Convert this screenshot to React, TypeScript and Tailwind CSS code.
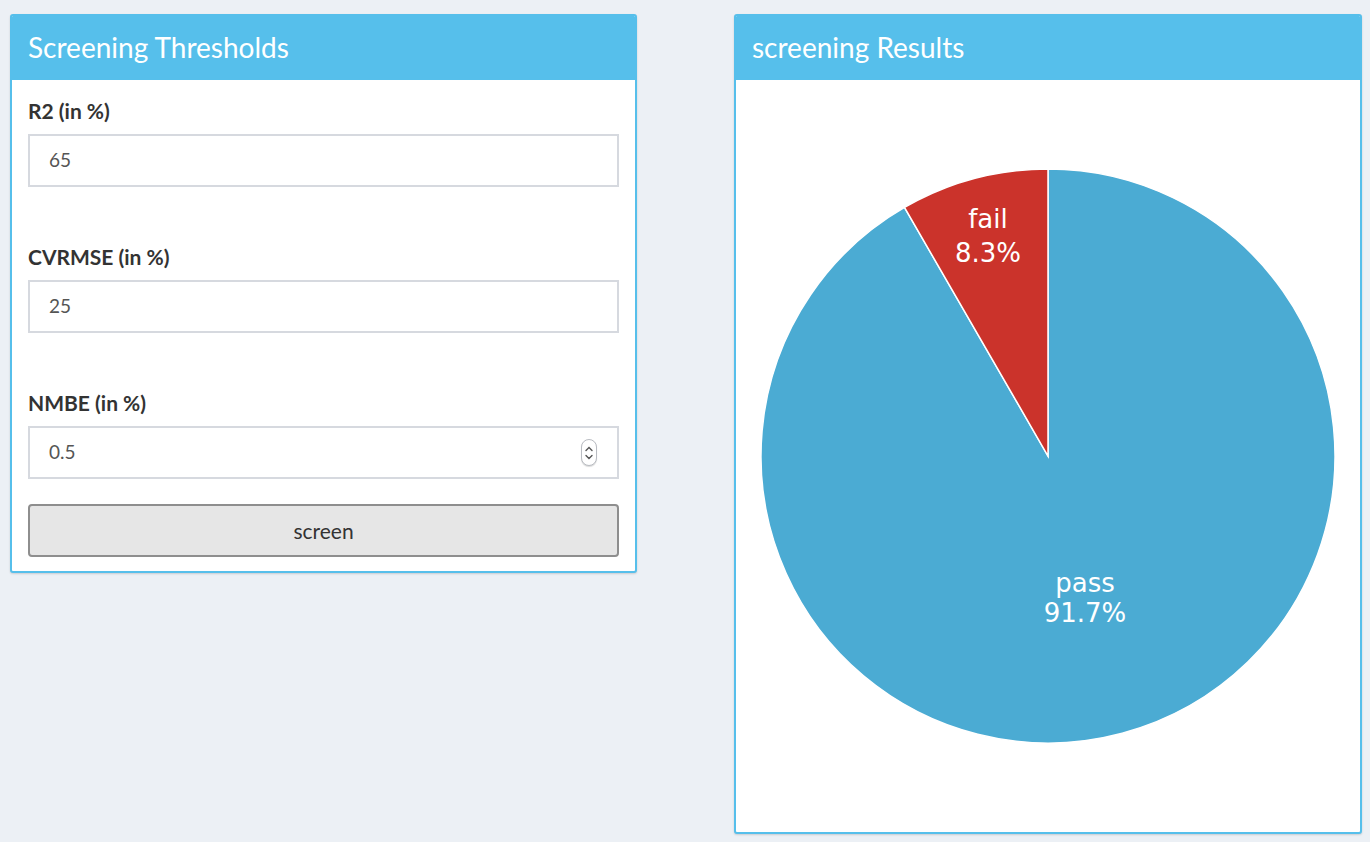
import React from 'react'

const font = { fontFamily: '"Source Sans Pro", Lato, "Open Sans", sans-serif' }

function Spinner() {
    return (
        <div className="flex h-[27px] w-[16px] flex-col items-center justify-center rounded-full border border-[#b9bcc2] bg-white shadow-[0_1px_1px_rgba(0,0,0,0.15)]">
            <svg width="10" height="18" viewBox="0 0 10 18" fill="none" stroke="#555" strokeWidth="1.4" strokeLinecap="round">
                <path d="M2 6.5 L5 3.5 L8 6.5" />
                <path d="M2 11.5 L5 14.5 L8 11.5" />
            </svg>
        </div>
    )
}

function Field({ label, value, spin, last }: { label: string; value: string; spin?: boolean; last?: boolean }) {
    return (
        <div className={last ? 'mb-[25px]' : 'mb-[59px]'}>
            <p className="mb-[12px] text-[21px] font-bold leading-[22px] text-[#333]">{label}</p>
            <div className="flex h-[53px] items-center justify-between border-2 border-[#d6d9df] pl-[19px] pr-[20px] text-[19px] text-[#555]">
                <span>{value}</span>
                {spin && <Spinner />}
            </div>
        </div>
    )
}

function Pie() {
    const cx = 314
    const cy = 376
    const r = 287
    const a = (30 * Math.PI) / 180
    const x = cx - r * Math.sin(a)
    const y = cy - r * Math.cos(a)
    return (
        <svg width="628" height="752" viewBox="0 0 628 752">
            <path d={`M${cx} ${cy} L${cx} ${cy - r} A${r} ${r} 0 1 1 ${x} ${y} Z`} fill="#4babd3" stroke="#fff" strokeWidth="1.5" />
            <path d={`M${cx} ${cy} L${x} ${y} A${r} ${r} 0 0 1 ${cx} ${cy - r} Z`} fill="#cb332b" stroke="#fff" strokeWidth="1.5" />
            <g fill="#fff" fontSize="26" textAnchor="middle" style={{ fontFamily: '"DejaVu Sans", sans-serif' }}>
                <text x="254" y="148">fail</text>
                <text x="254" y="182">8.3%</text>
                <text x="351" y="512">pass</text>
                <text x="351" y="542">91.7%</text>
            </g>
        </svg>
    )
}

function App() {
    return (
        <div className="flex min-h-[842px] w-full items-start gap-[97px] bg-[#ecf0f5] pl-[10px] pt-[14px]" style={font}>
            {/* left box */}
            <div className="w-[627px] overflow-hidden rounded-[3px] border-2 border-[#56bfeb] bg-white shadow-[0_1px_2px_rgba(0,0,0,0.15)]">
                <div className="flex h-[64px] items-center bg-[#56bfeb] px-[16px] pb-[2px] text-[28px] text-white">Screening Thresholds</div>
                <div className="px-[16px] pt-[20px] pb-[14px]">
                    <Field label="R2 (in %)" value="65" />
                    <Field label="CVRMSE (in %)" value="25" />
                    <Field label="NMBE (in %)" value="0.5" spin last />
                    <button className="flex h-[53px] w-full items-center justify-center rounded-[4px] border-2 border-[#8e8e8e] bg-[#e6e6e6] text-[21px] text-[#333]">screen</button>
                </div>
            </div>

            {/* right box */}
            <div className="h-[820px] w-[628px] overflow-hidden rounded-[3px] border-2 border-[#56bfeb] bg-white shadow-[0_1px_2px_rgba(0,0,0,0.15)]">
                <div className="flex h-[64px] items-center bg-[#56bfeb] px-[16px] pb-[2px] text-[28px] text-white">screening Results</div>
                <div className="-ml-[2px]">
                    <Pie />
                </div>
            </div>
        </div>
    )
}

export default App
